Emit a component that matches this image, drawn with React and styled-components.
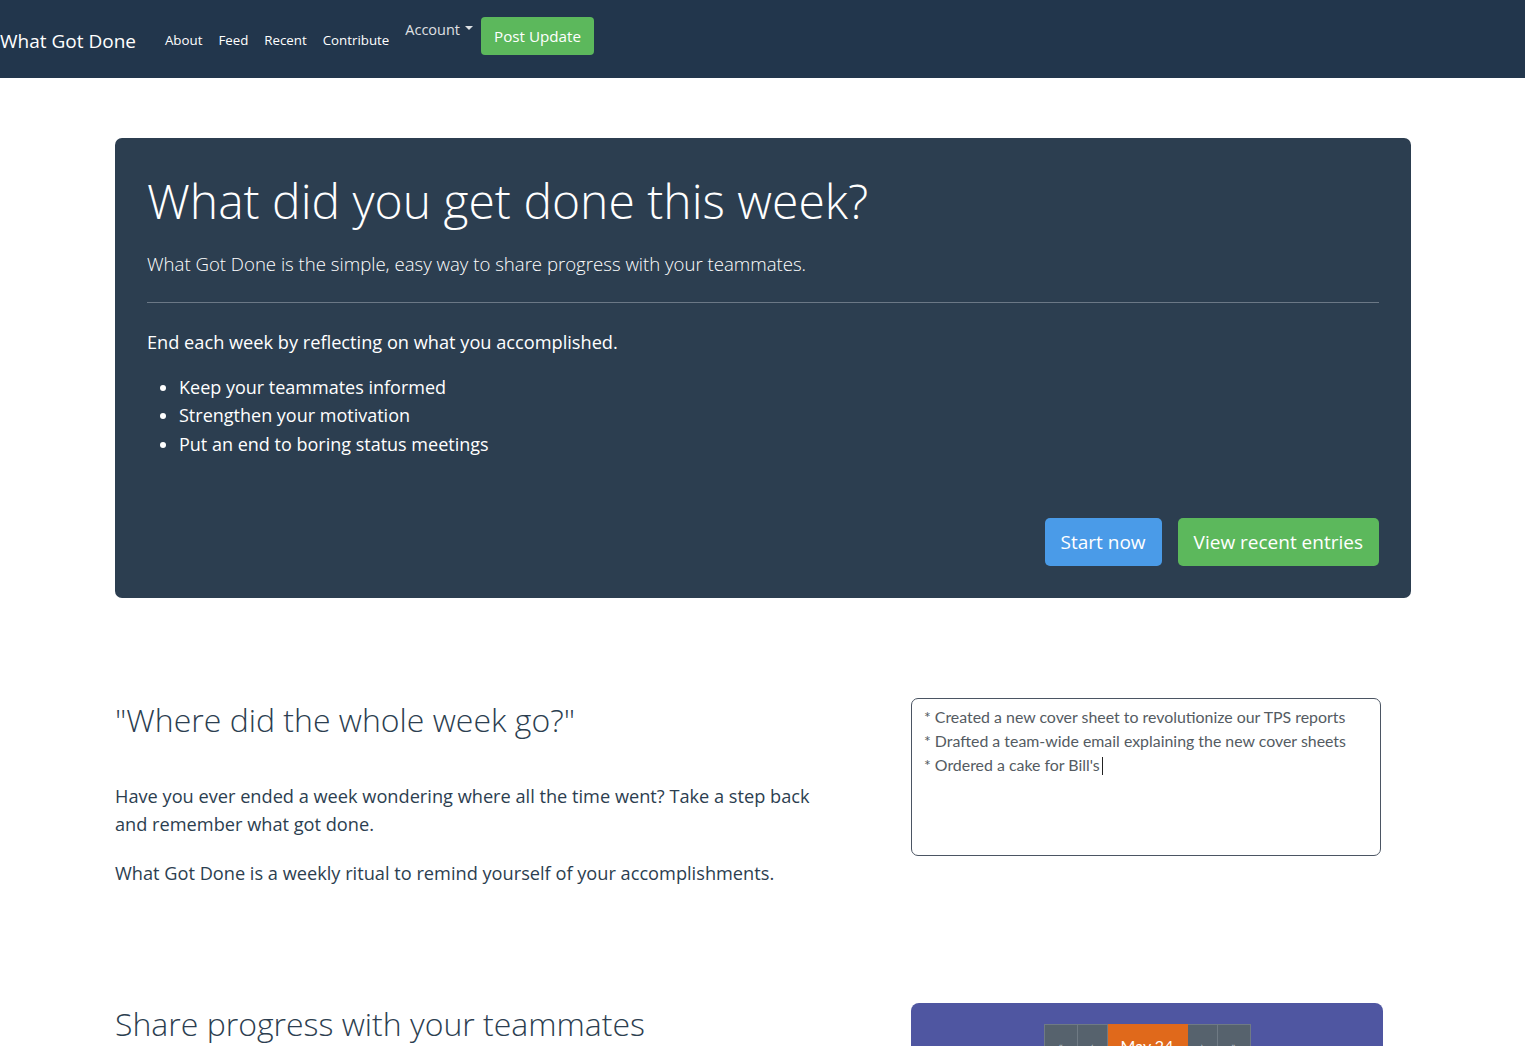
import React from "react";
import styled, { createGlobalStyle } from "styled-components";

const Global = createGlobalStyle`
  html, body { margin: 0; padding: 0; background: #fff; }
  body {
    font-family: "Open Sans", "Noto Sans", sans-serif;
    color: #2c3e50;
  }
  * { box-sizing: border-box; }
`;

const Nav = styled.nav`
  height: 78px;
  background: #22364c;
  display: flex;
  align-items: center;
  padding: 0;
`;

const Brand = styled.a`
  color: #fff;
  font-size: 19px;
  margin-right: 21px;
  margin-top: 4px;
  text-decoration: none;
  white-space: nowrap;
`;

const NavLink = styled.a`
  color: #fff;
  font-size: ${(p) => (p.$raised ? "14.5px" : "13.3px")};
  padding: 0 8px;
  margin-top: ${(p) => (p.$raised ? "-20px" : "2px")};
  text-decoration: none;
  white-space: nowrap;
  opacity: ${(p) => (p.$dim ? 0.85 : 1)};
  display: inline-flex;
  align-items: center;
  gap: 5px;
`;

const Caret = styled.span`
  width: 0;
  height: 0;
  border-left: 4px solid transparent;
  border-right: 4px solid transparent;
  border-top: 4px solid currentColor;
  margin-top: -3px;
`;

const NavButton = styled.a`
  background: #5cb85c;
  color: #fff;
  font-size: 15.2px;
  padding: 0 13px;
  height: 38px;
  display: inline-flex;
  align-items: center;
  border-radius: 4px;
  margin-top: -6px;
  text-decoration: none;
  white-space: nowrap;
`;

const Container = styled.main`
  width: 1296px;
  margin: 0 auto;
  padding-top: 60px;
  position: relative;
  left: 0.5px;
`;

const Hero = styled.section`
  background: #2c3e50;
  border-radius: 7px;
  padding: 32px;
  color: #fff;
  display: flex;
  flex-direction: column;
`;

const HeroTitle = styled.h1`
  margin: 0;
  font-weight: 300;
  font-size: 48px;
  line-height: 1.2;
  margin-top: 2px;
`;

const Lead = styled.p`
  margin: 20px 0 0;
  font-weight: 300;
  font-size: 18.6px;
  line-height: 1.5;
`;

const Rule = styled.hr`
  border: 0;
  border-top: 1px solid #6b7886;
  margin: 25px 0 25px;
`;

const Text = styled.p`
  margin: 0;
  font-size: 18.2px;
  line-height: 28.5px;
`;

const List = styled.ul`
  margin: 16px 0 0;
  padding-left: 32px;
  font-size: 18px;
  line-height: 28.5px;
`;

const Actions = styled.div`
  display: flex;
  justify-content: flex-end;
  gap: 16px;
  margin-top: 60px;
`;

const Btn = styled.a`
  background: ${(p) => p.$bg};
  color: #fff;
  font-size: 19px;
  height: 48px;
  padding: 0 16px;
  display: inline-flex;
  align-items: center;
  border-radius: 5px;
  text-decoration: none;
  white-space: nowrap;
`;

const Feature = styled.section`
  display: grid;
  grid-template-columns: 796px 470px;
  align-items: start;
  margin-top: ${(p) => p.$mt}px;
`;

const FeatureText = styled.div`
  padding-top: ${(p) => p.$pt || 0}px;
`;

const FeatureTitle = styled.h2`
  margin: 0 0 ${(p) => p.$mb || 0}px;
  font-weight: 300;
  font-size: 32px;
  line-height: 38px;
`;

const Body = styled.p`
  margin: 0 0 21px;
  font-size: 18.2px;
  line-height: 28px;
`;

const Editor = styled.div`
  border: 1px solid #4b5563;
  border-radius: 7px;
  height: 158px;
  padding: 6px 12px;
  font-family: "Lato", sans-serif;
  font-size: 15.9px;
  line-height: 24px;
  color: #545b62;
`;

const Cursor = styled.span`
  display: inline-block;
  width: 1px;
  height: 18px;
  background: #222;
  vertical-align: -4px;
  margin-left: 2px;
`;

const Purple = styled.div`
  background: #4f56a1;
  border-radius: 8px 8px 0 0;
  height: 60px;
  width: 472px;
  display: flex;
  justify-content: center;
  padding-top: 21px;
`;

const Pager = styled.div`
  display: flex;
  font-family: "Lato", sans-serif;
`;

const PageItem = styled.span`
  width: ${(p) => p.$w}px;
  height: 40px;
  background: ${(p) => (p.$active ? "#e0691b" : "#56626d")};
  border: 1px solid ${(p) => (p.$active ? "#e0691b" : "#6f7a84")};
  border-left: ${(p) => (p.$first ? "1px solid #6f7a84" : "0")};
  color: ${(p) => (p.$active ? "#fff" : "#b8c0c8")};
  font-size: ${(p) => (p.$active ? "16px" : "11px")};
  display: flex;
  align-items: center;
  justify-content: center;
  padding-top: 2px;
`;

export default function App() {
  return (
    <>
      <Global />
      <Nav>
        <Brand href="#">What Got Done</Brand>
        <NavLink href="#">About</NavLink>
        <NavLink href="#">Feed</NavLink>
        <NavLink href="#">Recent</NavLink>
        <NavLink href="#">Contribute</NavLink>
        <NavLink href="#" $raised $dim>
          Account <Caret />
        </NavLink>
        <NavButton href="#">Post Update</NavButton>
      </Nav>
      <Container>
        <Hero>
          <HeroTitle>What did you get done this week?</HeroTitle>
          <Lead>What Got Done is the simple, easy way to share progress with your teammates.</Lead>
          <Rule />
          <Text>End each week by reflecting on what you accomplished.</Text>
          <List>
            <li>Keep your teammates informed</li>
            <li>Strengthen your motivation</li>
            <li>Put an end to boring status meetings</li>
          </List>
          <Actions>
            <Btn href="#" $bg="#4a9be8">Start now</Btn>
            <Btn href="#" $bg="#5cb85c">View recent entries</Btn>
          </Actions>
        </Hero>

        <Feature $mt={100}>
          <FeatureText $pt={3}>
            <FeatureTitle $mb={43}>"Where did the whole week go?"</FeatureTitle>
            <Body>
              Have you ever ended a week wondering where all the time went? Take a step back
              <br />
              and remember what got done.
            </Body>
            <Body>What Got Done is a weekly ritual to remind yourself of your accomplishments.</Body>
          </FeatureText>
          <Editor>
            * Created a new cover sheet to revolutionize our TPS reports
            <br />* Drafted a team-wide email explaining the new cover sheets
            <br />* Ordered a cake for Bill's
            <Cursor />
          </Editor>
        </Feature>

        <Feature $mt={95}>
          <FeatureText $pt={2}>
            <FeatureTitle>Share progress with your teammates</FeatureTitle>
          </FeatureText>
          <Purple>
            <Pager>
              <PageItem $w={34} $first>«</PageItem>
              <PageItem $w={30}>‹</PageItem>
              <PageItem $w={80} $active>May 24</PageItem>
              <PageItem $w={30}>›</PageItem>
              <PageItem $w={33}>»</PageItem>
            </Pager>
          </Purple>
        </Feature>
      </Container>
    </>
  );
}
